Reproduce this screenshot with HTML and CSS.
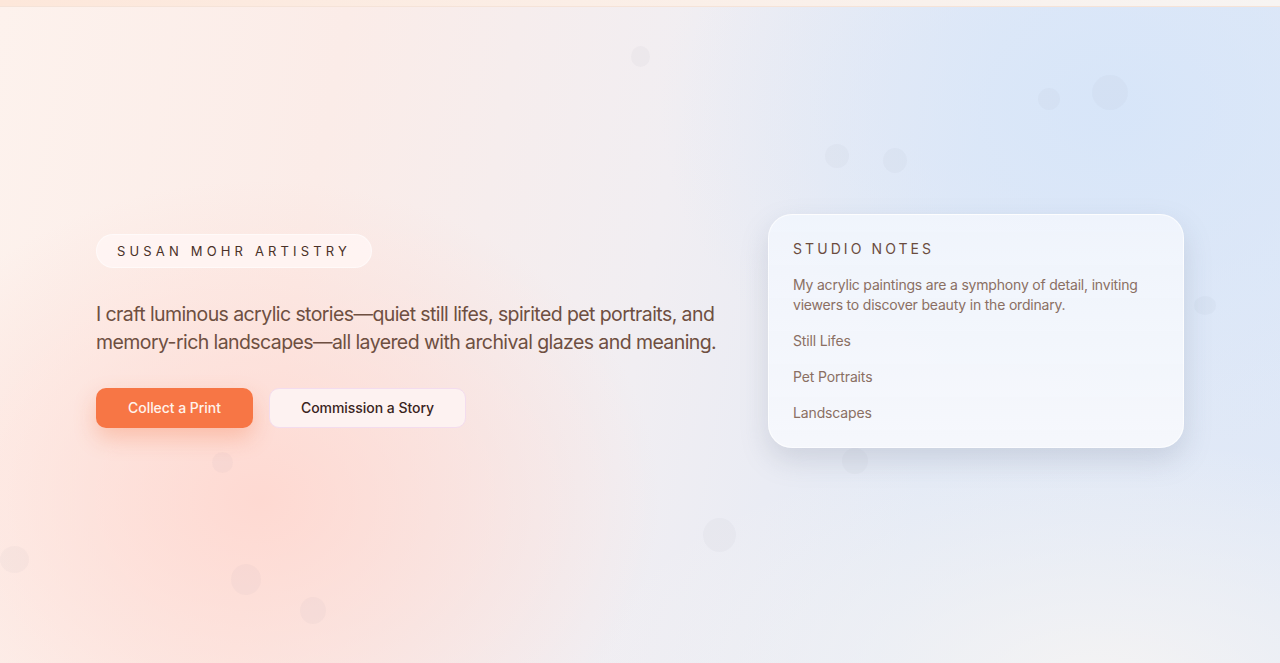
FILE: index.html
```html
<!DOCTYPE html>
<html lang="en">
<head>
<meta charset="utf-8">
<title>Susan Mohr Artistry</title>
<link rel="stylesheet" href="styles.css">
</head>
<body>
<div class="topbar"></div>
<main class="hero">
  <div class="specks" aria-hidden="true">
    <span class="speck" style="left:631px;top:47px;width:19px;height:21px"></span>
    <span class="speck" style="left:1038px;top:89px;width:22px;height:22px"></span>
    <span class="speck" style="left:1092px;top:76px;width:36px;height:35px"></span>
    <span class="speck" style="left:825px;top:145px;width:24px;height:24px"></span>
    <span class="speck" style="left:883px;top:149px;width:24px;height:25px"></span>
    <span class="speck" style="left:1194px;top:297px;width:22px;height:19px"></span>
    <span class="speck" style="left:842px;top:449px;width:26px;height:26px"></span>
    <span class="speck" style="left:703px;top:519px;width:33px;height:34px"></span>
    <span class="speck" style="left:212px;top:453px;width:21px;height:21px"></span>
    <span class="speck" style="left:0px;top:547px;width:29px;height:27px"></span>
    <span class="speck" style="left:231px;top:565px;width:30px;height:31px"></span>
    <span class="speck" style="left:300px;top:598px;width:26px;height:27px"></span>
  </div>
  <div class="hero-inner">
    <section class="intro">
      <div class="badge">Susan Mohr Artistry</div>
      <p class="lead">I craft luminous acrylic stories—quiet still lifes, spirited pet portraits, and memory-rich landscapes—all layered with archival glazes and meaning.</p>
      <div class="actions">
        <a class="btn btn-primary" href="#">Collect a Print</a>
        <a class="btn btn-secondary" href="#">Commission a Story</a>
      </div>
    </section>
    <aside class="notes">
      <h2 class="notes-title">Studio Notes</h2>
      <p class="notes-text">My acrylic paintings are a symphony of detail, inviting viewers to discover beauty in the ordinary.</p>
      <span class="notes-item">Still Lifes</span>
      <span class="notes-item">Pet Portraits</span>
      <span class="notes-item">Landscapes</span>
    </aside>
  </div>
</main>
</body>
</html>
```
FILE: styles.css
```css
* { box-sizing: border-box; }
html, body { margin: 0; padding: 0; }
body {
  font-family: Inter, "Noto Sans", "Liberation Sans", sans-serif;
  min-height: 100vh;
  overflow: hidden;
  background:
    radial-gradient(ellipse 400px 320px at 260px 500px, rgba(255, 214, 206, 0.85), rgba(255, 214, 206, 0) 100%),
    radial-gradient(ellipse 460px 340px at 1120px 110px, rgba(214, 229, 249, 0.9), rgba(214, 229, 249, 0) 100%),
    radial-gradient(ellipse 520px 240px at 1100px 680px, rgba(246, 244, 243, 0.9), rgba(246, 244, 243, 0) 100%),
    linear-gradient(100deg, #fdf2ed 0%, #fbece8 25%, #f1eef2 50%, #e3eaf6 72%, #dfe8f7 100%);
}
.topbar {
  height: 7px;
  background: linear-gradient(90deg, #fde7da 0%, #fbeee6 45%, #f7f4f2 100%);
  border-bottom: 1px solid #f5e3d8;
}
.hero {
  position: relative;
  min-height: calc(100vh - 7px);
  display: flex;
  align-items: center;
  padding: 0 96px 8px;
}
.specks {
  position: absolute;
  inset: -8px 0 0 0;
  pointer-events: none;
}
.speck {
  position: absolute;
  border-radius: 50%;
  background: rgba(150, 140, 160, 0.055);
}
.hero-inner {
  position: relative;
  width: 100%;
  display: grid;
  grid-template-columns: 1.5fr 1fr;
  gap: 48px;
  align-items: center;
}
.intro {
  display: flex;
  flex-direction: column;
  align-items: flex-start;
}
.badge {
  display: inline-block;
  padding: 8px 20px;
  border: 1px solid rgba(255, 255, 255, 0.5);
  border-radius: 999px;
  background: rgba(255, 246, 244, 0.85);
  color: #4a3128;
  font-size: 13px;
  line-height: 16px;
  letter-spacing: 0.32em;
  text-transform: uppercase;
}
.lead {
  margin: 32px 0 32px;
  color: #6e4f41;
  font-size: 19.5px;
  line-height: 28px;
  letter-spacing: -0.03em;
}
.actions {
  display: flex;
  gap: 16px;
}
.btn {
  display: inline-block;
  padding: 10px 32px;
  border-radius: 10px;
  font-size: 14px;
  font-weight: 500;
  line-height: 20px;
  letter-spacing: -0.003em;
  text-decoration: none;
}
.btn-primary {
  background: #f77645;
  color: #fff3ec;
  box-shadow: 0 10px 22px rgba(247, 118, 69, 0.32);
}
.btn-secondary {
  padding: 9px 31px;
  background: #fdf2f1;
  border: 1px solid #f3dcee;
  color: #3a241d;
}
.notes {
  display: flex;
  flex-direction: column;
  gap: 16px;
  padding: 24px;
  border: 1px solid rgba(255, 255, 255, 0.7);
  border-radius: 24px;
  background: linear-gradient(180deg, rgba(241, 245, 252, 0.92) 0%, rgba(246, 248, 252, 0.95) 100%);
  box-shadow: 0 12px 28px rgba(120, 130, 150, 0.24);
}
.notes-title {
  margin: 0;
  color: #6b4c3e;
  font-size: 14px;
  font-weight: 400;
  line-height: 20px;
  letter-spacing: 0.22em;
  text-transform: uppercase;
}
.notes-text {
  margin: 0;
  color: #8a6f63;
  font-size: 14px;
  line-height: 20px;
  letter-spacing: -0.014em;
}
.notes-item {
  color: #8a6f63;
  font-size: 14px;
  line-height: 20px;
  letter-spacing: -0.01em;
}
```
